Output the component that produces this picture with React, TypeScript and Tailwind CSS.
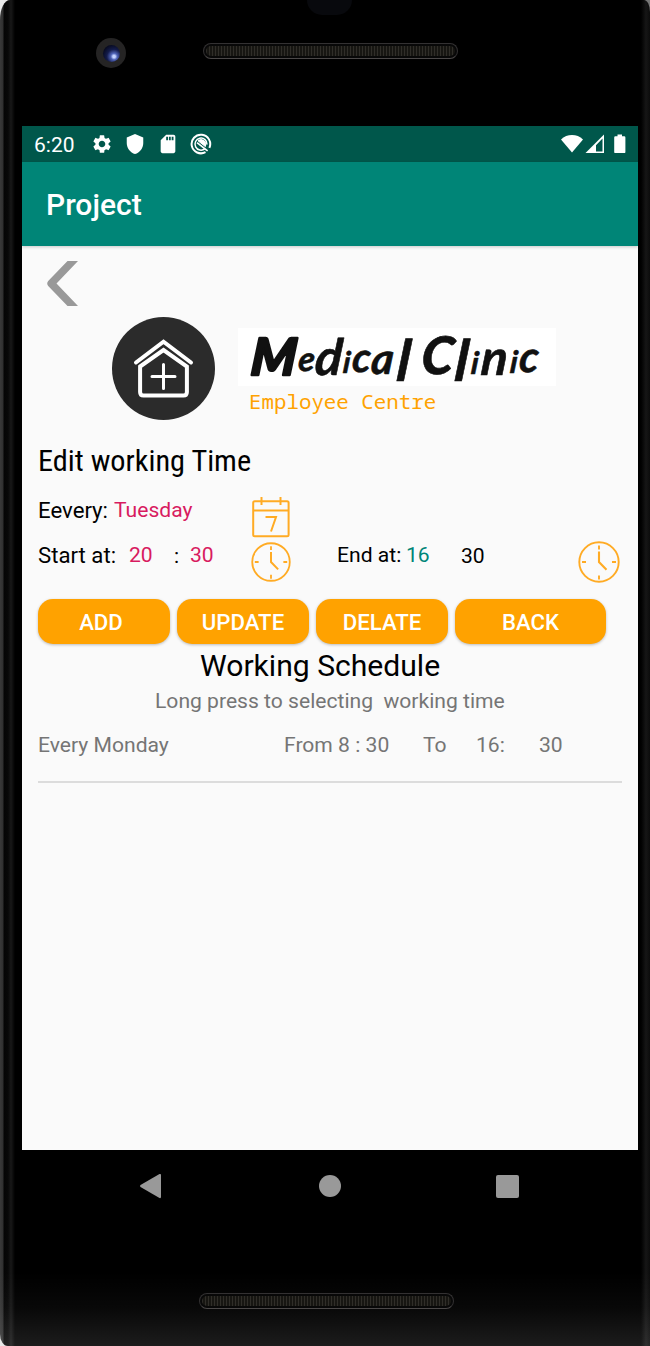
import type { ReactNode } from "react";
import { MdSettings, MdSdCard, MdShield } from "react-icons/md";

function Speaker({ className }: { className: string }) {
  return (
    <div
      className={`h-4 w-[255px] rounded-full border border-[#333132] border-b-[#4b4848] bg-[#080808] p-[2px] ${className}`}
    >
      <div className="h-full rounded-full bg-[repeating-linear-gradient(90deg,#302e29_0_1px,#171612_1px_3px)]" />
    </div>
  );
}

function Clock({ size }: { size: number }) {
  return (
    <svg width={size} height={size} viewBox="0 0 42 42" fill="none" stroke="#ffab24" strokeWidth="1.9" className="shrink-0">
      <circle cx="21" cy="21" r="19.7" />
      <path d="M21 4.5v4M21 34.5v4M4 21h4M34 21h4" />
      <path d="M21 10.5v10.5l7.5 7.7" strokeWidth="2.1" />
    </svg>
  );
}

function Calendar() {
  return (
    <svg width="38" height="42" viewBox="0 0 38 42" fill="none" stroke="#ffab24" strokeWidth="2" className="shrink-0">
      <rect x="1.2" y="5.2" width="35.4" height="35" rx="1.5" />
      <path d="M1.2 14.500h35.400M9.500 1v8M28.500 1v8" />
      <path d="M13.500 21h10.500l-5 14.500" />
    </svg>
  );
}

function StatusBar() {
  return (
    <div className="flex h-9 items-center bg-[#00574b] pl-3 text-white">
      <span className="w-[58px] pt-[2px] text-[21px] leading-none">6:20</span>
      <MdSettings className="mr-[11px] -ml-px size-[22px]" />
      <MdShield className="mr-[11px] size-[22px]" />
      <MdSdCard className="mr-[11px] size-[22px]" />
      <svg width="22" height="22" viewBox="0 0 22 22" fill="none" stroke="white">
        <path d="M15.500 19.100A9.300 9.300 0 1 1 19.400 14.800" strokeWidth="2" />
        <path d="M15 15.600A6 6 0 1 1 17 11.500" strokeWidth="1.500" />
        <path d="M8 7.800A4.800 4.800 0 0 1 15.400 13.600Z" fill="white" strokeWidth="1" />
        <path d="M7 9.600L17.600 17.800" strokeWidth="1.700" />
      </svg>
      <svg width="66" height="20" viewBox="0 0 66 20" className="ml-auto mr-[11px]" fill="white">
        <path d="M0 5.4C6-.5 16-.5 22 5.4L11 18.5Z" />
        <path fillRule="evenodd" d="M43 .5V19H24.500ZM41.500 4.500L35 11.300V17.400H41.500Z" />
        <path d="M56.500 .5h4.500v1.800h2.200q1.200 0 1.200 1.200v14.400q0 1.200-1.200 1.200h-8.800q-1.200 0-1.200-1.200V3.500q0-1.200 1.200-1.200h2.100z" />
      </svg>
    </div>
  );
}

function Logo() {
  return (
    <svg width="104" height="104" viewBox="0 0 104 104" fill="none" stroke="white" strokeLinecap="round" className="shrink-0">
      <circle cx="51.500" cy="51.500" r="51.500" fill="#2b2b2b" stroke="none" />
      <path d="M24 45.500L51.500 24.700L79 45.500" strokeWidth="4" strokeLinejoin="miter" />
      <path d="M28.100 49.500L51.500 33L74.900 49.500V75Q74.900 78.500 71.500 78.500H31.500Q28.100 78.500 28.100 75Z" strokeWidth="4" strokeLinejoin="miter" />
      <path d="M51.500 47.500V71.500M40 59.500H63" strokeWidth="3" />
    </svg>
  );
}

function Wordmark() {
  return (
    <svg
      width="318"
      height="58"
      viewBox="0 0 318 58"
      className="overflow-visible bg-white"
      fill="#111"
      stroke="#111"
      strokeLinejoin="round"
      fontFamily="Lato, sans-serif"
      fontStyle="italic"
      fontWeight="700"
    >
      <text transform="translate(0 48) skewX(-5)" strokeWidth="0.6">
        <tspan x="12" y="-1" fontSize="51" fontWeight="900" strokeWidth="2.5">M</tspan>
        <tspan x="59" y="-5" fontSize="34">e</tspan>
        <tspan x="76" y="-1" fontSize="50">d</tspan>
        <tspan x="104" y="-3" fontSize="30">i</tspan>
        <tspan x="113" y="-4" fontSize="41">c</tspan>
        <tspan x="132" y="-2" fontSize="43">a</tspan>
        <tspan x="158" y="5" fontSize="57">l</tspan>
        <tspan x="170" y="0" fontSize="31"> </tspan>
        <tspan x="182" y="-2" fontSize="52" fontWeight="900">C</tspan>
        <tspan x="216" y="5" fontSize="57">l</tspan>
        <tspan x="232" y="-2" fontSize="31">i</tspan>
        <tspan x="242" y="-1" fontSize="49">n</tspan>
        <tspan x="271" y="-3" fontSize="31">i</tspan>
        <tspan x="280" y="-4" fontSize="43">c</tspan>
      </text>
    </svg>
  );
}

function ActionButton({ children, className }: { children: ReactNode; className: string }) {
  return (
    <button
      className={`h-[45px] rounded-[15px] bg-[#ffa200] pt-[2px] text-[22.2px] font-medium text-white shadow-[0_1px_3px_rgba(0,0,0,0.25)] ${className}`}
    >
      {children}
    </button>
  );
}

function Screen() {
  return (
    <div className="flex h-[1024px] w-[616px] flex-col bg-[#fafafa] text-[21.100px] leading-[25px] whitespace-nowrap text-black">
      <StatusBar />
      <header className="flex h-[84px] shrink-0 items-center bg-[#008577] pt-px pl-6 text-[30px] font-medium text-white shadow-[0_1px_3px_rgba(0,0,0,0.2)]">
        Project
      </header>
      <main className="flex flex-col px-4">
        <div className="h-[71px] pt-[15px] pl-[9px]">
          <svg width="32" height="45" viewBox="0 0 32 45">
            <path d="M20.500 0H31L9.500 22.500L31 45H20.500L1.200 25Q-.8 22.500 1.200 20Z" fill="#999" />
          </svg>
        </div>
        <div className="flex h-[123px] items-start pl-[74px]">
          <Logo />
          <div className="ml-[22px] pt-[11px]">
            <Wordmark />
            <p className="pt-[3px] pl-[11px] font-['Noto_Sans_Mono','DejaVu_Sans_Mono',monospace] text-[20.800px] text-[#ffa200]">
              Employee Centre
            </p>
          </div>
        </div>
        <h2 className="flex h-[56px] items-start pt-[9px] text-[30.300px] leading-[24px]">
          <span className="font-['Roboto_Condensed',Roboto,sans-serif]">Edit working Time</span>
        </h2>
        <div className="flex h-[45px] items-start">
          <span className="w-[76px] pt-[2px] text-[22.200px]">Eevery:</span>
          <span className="w-[138px] pt-px text-[#d81b60]">Tuesday</span>
          <Calendar />
        </div>
        <div className="flex h-[58px] items-start">
          <span className="w-[91px] pt-[2px] text-[22.200px]">Start at:</span>
          <span className="w-[45px] pt-px text-[#d81b60]">20</span>
          <span className="w-4 pt-[2px]">:</span>
          <span className="w-[61px] pt-px text-[#d81b60]">30</span>
          <div className="pt-px">
            <Clock size={40} />
          </div>
          <span className="ml-[46px] w-[69px] pt-px">End at:</span>
          <span className="w-[55px] pt-px text-[#008577]">16</span>
          <span className="w-[117px] pt-[2px]">30</span>
          <Clock size={42} />
        </div>
        <div className="flex gap-[7px]">
          <ActionButton className="w-[132px] pr-[6px]">ADD</ActionButton>
          <ActionButton className="w-[132px]">UPDATE</ActionButton>
          <ActionButton className="w-[132px]">DELATE</ActionButton>
          <ActionButton className="w-[151px]">BACK</ActionButton>
        </div>
        <h2 className="h-[44px] pt-[10px] pl-[162px] text-[30.100px] leading-[24px]">Working Schedule</h2>
        <p className="h-[44px] pl-[117px] whitespace-pre text-[#757575]">{"Long press to selecting  working time"}</p>
        <div className="flex h-[51px] border-b-2 border-[#dcdcdc] text-[#757575]">
          <span className="w-[246px]">Every Monday</span>
          <span className="w-[139px]">From 8 : 30</span>
          <span className="w-[53px]">To</span>
          <span className="w-[63px]">16:</span>
          <span>30</span>
        </div>
      </main>
    </div>
  );
}

export default function App() {
  return (
    <div className="h-[1346px] w-[650px] overflow-hidden bg-[linear-gradient(90deg,#e8e8e8_50%,#777_50%)] font-[Roboto,sans-serif]">
      <div className="flex h-full w-full flex-col overflow-hidden rounded-tl-[10px_20px] rounded-tr-[6px_12px] rounded-bl-[8px_12px] bg-black bg-[linear-gradient(90deg,#3a3a3a_0,#303030_3px,#050505_4px,#080808_8px,#181818_11px,#000_15px,#000_641px,#161616_646px,#0c0c0c_650px)]">
        <div className="flex h-[126px] shrink-0 flex-col">
          <div className="ml-[307px] h-[15px] w-[45px] rounded-b-full bg-[#08090d]" />
          <div className="flex items-center pt-[23px] pl-[96px]">
            <div className="flex size-[30px] items-center justify-center rounded-full bg-[#252424]">
              <div className="size-[17px] rounded-full bg-[radial-gradient(circle_at_65%_68%,#c3d2ff_0_8%,#5064b8_20%,#141c4b_45%,#080b20_75%)]" />
            </div>
            <Speaker className="mb-[5px] ml-[77px]" />
          </div>
        </div>
        <div className="pl-[22px]">
          <Screen />
        </div>
        <div className="flex h-[72px] shrink-0 items-center pl-[139px]">
          <svg width="23" height="26" viewBox="0 0 23 26" fill="#999">
            <path d="M20.500 1Q22 .5 22 2V24Q22 25.500 20.500 25L1.500 14Q.5 13 1.500 12Z" />
          </svg>
          <div className="ml-[157px] size-[22px] rounded-full bg-[#999]" />
          <div className="ml-[155px] size-[23px] rounded-[2px] bg-[#999]" />
        </div>
        <div className="flex-1 bg-[linear-gradient(transparent_50px,rgba(255,255,255,0.03)_85px,rgba(255,255,255,0.11)_124px)] pt-[71px]">
          <Speaker className="ml-[199px]" />
        </div>
      </div>
    </div>
  );
}
